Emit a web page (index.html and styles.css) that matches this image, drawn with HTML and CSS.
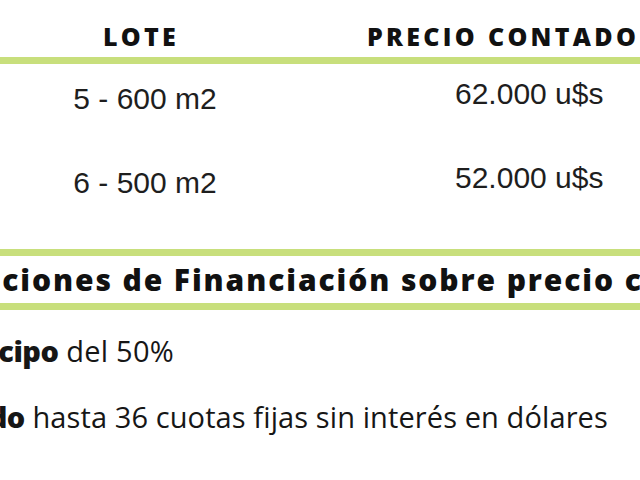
FILE: index.html
```html
<!DOCTYPE html>
<html lang="es">
<head>
<meta charset="utf-8">
<title>Precios y financiación</title>
<link rel="stylesheet" href="styles.css">
</head>
<body>
<main class="sheet">
  <section class="prices">
    <div class="thead">
      <div class="th th-lote">LOTE</div>
      <div class="th th-precio">PRECIO CONTADO</div>
    </div>
    <div class="row">
      <div class="cell cell-lote">5 - 600 m2</div>
      <div class="cell cell-precio">62.000 u$s</div>
    </div>
    <div class="row">
      <div class="cell cell-lote">6 - 500 m2</div>
      <div class="cell cell-precio">52.000 u$s</div>
    </div>
  </section>
  <section class="finance">
    <h2 class="finance-title">Condiciones de Financiación sobre precio contado</h2>
    <ul class="terms">
      <li class="term term-1"><b>Anticipo</b> del 50%</li>
      <li class="term term-2"><b>Saldo</b> hasta 36 cuotas fijas sin interés en dólares</li>
    </ul>
  </section>
</main>
</body>
</html>
```

FILE: styles.css
```css
html, body {
  margin: 0;
  padding: 0;
  background: #ffffff;
}
body {
  width: 640px;
  height: 480px;
  overflow: hidden;
}
.sheet {
  width: 640px;
  overflow: hidden;
}
.thead {
  display: grid;
  grid-template-columns: 290px 350px;
  align-items: end;
  height: 57px;
  border-bottom: 7px solid #c8df7c;
  font-family: "Open Sans", "Lato", sans-serif;
  font-weight: 800;
  font-size: 25px;
  letter-spacing: 3.3px;
  line-height: 1;
  color: #111111;
}
.th {
  padding-bottom: 8px;
  white-space: nowrap;
}
.th-lote {
  text-align: center;
  padding-right: 8px;
}
.th-precio {
  padding-left: 77px;
}
.row {
  display: grid;
  grid-template-columns: 290px 350px;
  height: 84px;
  font-family: "Liberation Sans", Arial, sans-serif;
  font-size: 30px;
  line-height: 1;
  color: #1e1e1e;
}
.cell-lote {
  text-align: center;
  padding-top: 20px;
}
.cell-precio {
  padding-left: 165px;
  padding-top: 15px;
}
.finance {
  margin-top: 17px;
}
.finance-title {
  margin: 0 -400px 0 -95px;
  height: 47px;
  line-height: 47px;
  border-top: 7px solid #c8df7c;
  border-bottom: 7px solid #c8df7c;
  font-family: "Open Sans", "Lato", sans-serif;
  font-weight: 800;
  font-size: 30px;
  letter-spacing: 1.9px;
  color: #111111;
  white-space: nowrap;
}
.terms {
  list-style: none;
  margin: 0;
  padding: 0;
  font-family: "Open Sans", "Lato", sans-serif;
  font-size: 29px;
  letter-spacing: 0.25px;
  color: #161616;
  white-space: nowrap;
}
.term b {
  font-weight: 800;
  letter-spacing: -0.5px;
}
.term-1 {
  margin-top: 21px;
  margin-left: -63px;
}
.term-2 {
  margin-top: 27px;
  margin-left: -54px;
  letter-spacing: 0.1px;
}
```
